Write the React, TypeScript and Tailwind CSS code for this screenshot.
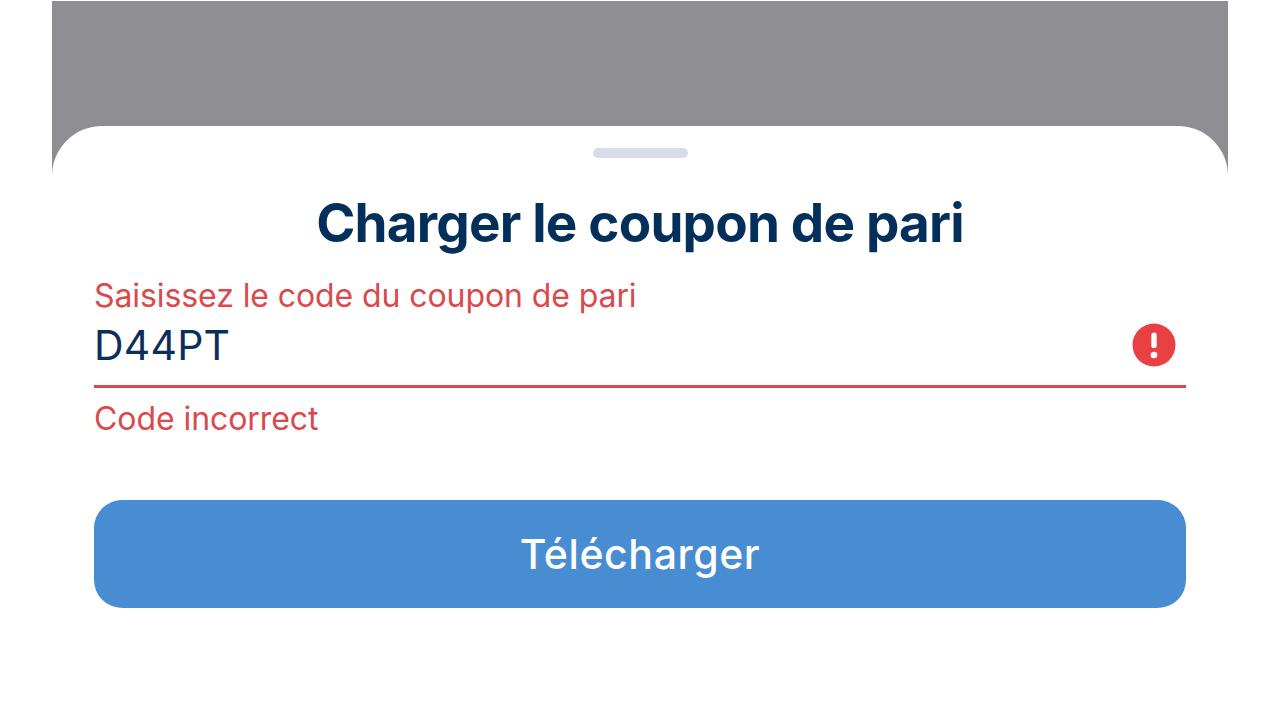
function ErrorIcon() {
  return (
    <svg width="44" height="44" viewBox="0 0 44 44" fill="none" aria-hidden="true">
      <circle cx="22" cy="22" r="21.5" fill="#E94043" />
      <path d="M22 12.2V22.4" stroke="white" strokeWidth="5.4" strokeLinecap="round" />
      <circle cx="22" cy="32" r="3.3" fill="white" />
    </svg>
  );
}

export default function App() {
  return (
    <div className="h-[719px] bg-white px-[52px] pt-px overflow-hidden font-['Inter',sans-serif]">
      <div className="h-[180px] bg-[#8E8E93] pt-[125px]">
        <div className="h-[593px] bg-white rounded-t-[50px] px-[42px] flex flex-col">
          {/* Drag handle */}
          <div className="mt-[22px] h-[10px] w-[95px] shrink-0 self-center rounded-[5px] bg-[#D7DCE8]" />

          <h1 className="mt-[33px] text-center text-[53px] leading-[64px] tracking-[-0.8px] font-bold text-[#032F5B] whitespace-nowrap">
            Charger le coupon de pari
          </h1>

          <div className="mt-[22px]">
            <label htmlFor="code" className="block w-max text-[32px] leading-[38px] tracking-[-0.09px] text-[#DA4A4D]">
              Saisissez le code du coupon de pari
            </label>
            <div className="flex items-center justify-between h-[73px] pb-[10px] pr-[10px] border-b-[3px] border-[#D94A4D]">
              <input
                id="code"
                name="code"
                type="text"
                defaultValue="D44PT"
                className="w-[400px] h-[56px] p-0 pt-[2px] bg-transparent text-[41px] tracking-[0.2px] text-[#0A2F5A] focus:outline-none"
              />
              <ErrorIcon />
            </div>
            <p className="mt-[12px] w-max text-[32px] leading-[38px] tracking-[-0.07px] text-[#DA4A4D]">Code incorrect</p>
          </div>

          <button
            type="button"
            className="mt-[62px] h-[108px] w-full shrink-0 rounded-[28px] bg-[#488DD2] pt-[2px] text-[41px] tracking-[0.6px] font-medium text-white"
          >
            Télécharger
          </button>
        </div>
      </div>
    </div>
  );
}
